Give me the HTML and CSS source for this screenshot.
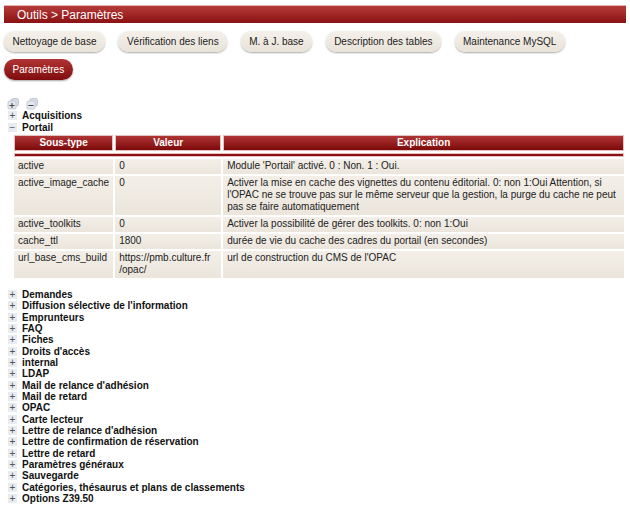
FILE: index.html
```html
<!DOCTYPE html>
<html lang="fr">
<head>
<meta charset="utf-8">
<title>Outils &gt; Paramètres</title>
<link rel="stylesheet" href="styles.css">
</head>
<body>
<div class="titlebar">Outils &gt; Paramètres</div>
<div class="tabs">
  <span class="tab">Nettoyage de base</span>
  <span class="tab">Vérification des liens</span>
  <span class="tab">M. à J. base</span>
  <span class="tab">Description des tables</span>
  <span class="tab">Maintenance MySQL</span>
</div>
<div class="tabs">
  <span class="tab active">Paramètres</span>
</div>

<div class="allicons">
  <svg class="allicon" width="12" height="12" viewBox="0 0 12 12"><rect x="4" y="0.5" width="7.5" height="7.5" rx="1.5" fill="#d6dce6" stroke="#c3cad6"/><rect x="1" y="3" width="8" height="8" rx="1.5" fill="#e3e8ef" stroke="#c3cad6"/><path d="M5 5v5M2.5 7.5h5" stroke="#444" stroke-width="1"/></svg>
  <svg class="allicon" width="12" height="12" viewBox="0 0 12 12"><rect x="4" y="0.5" width="7.5" height="7.5" rx="1.5" fill="#d6dce6" stroke="#c3cad6"/><rect x="1" y="3" width="8" height="8" rx="1.5" fill="#e3e8ef" stroke="#c3cad6"/><path d="M2.5 7.5h5" stroke="#444" stroke-width="1"/></svg>
</div>

<div class="item"><span class="pm">+</span>Acquisitions</div>
<div class="item"><span class="pm">−</span>Portail</div>

<div class="tablewrap">
<table class="params">
  <thead>
    <tr><th class="c1">Sous-type</th><th class="c2">Valeur</th><th class="c3">Explication</th></tr>
    <tr class="sep"><th colspan="3"></th></tr>
  </thead>
  <tbody>
    <tr><td>active</td><td>0</td><td>Module 'Portail' activé. 0 : Non. 1 : Oui.</td></tr>
    <tr><td>active_image_cache</td><td>0</td><td>Activer la mise en cache des vignettes du contenu éditorial. 0: non 1:Oui Attention, si l'OPAC ne se trouve pas sur le même serveur que la gestion, la purge du cache ne peut pas se faire automatiquement</td></tr>
    <tr><td>active_toolkits</td><td>0</td><td>Activer la possibilité de gérer des toolkits. 0: non 1:Oui</td></tr>
    <tr><td>cache_ttl</td><td>1800</td><td>durée de vie du cache des cadres du portail (en secondes)</td></tr>
    <tr><td>url_base_cms_build</td><td>https://pmb.culture.fr<br>/opac/</td><td>url de construction du CMS de l'OPAC</td></tr>
  </tbody>
</table>
</div>

<div class="list">
  <div class="item"><span class="pm">+</span>Demandes</div>
  <div class="item"><span class="pm">+</span>Diffusion sélective de l'information</div>
  <div class="item"><span class="pm">+</span>Emprunteurs</div>
  <div class="item"><span class="pm">+</span>FAQ</div>
  <div class="item"><span class="pm">+</span>Fiches</div>
  <div class="item"><span class="pm">+</span>Droits d'accès</div>
  <div class="item"><span class="pm">+</span>internal</div>
  <div class="item"><span class="pm">+</span>LDAP</div>
  <div class="item"><span class="pm">+</span>Mail de relance d'adhésion</div>
  <div class="item"><span class="pm">+</span>Mail de retard</div>
  <div class="item"><span class="pm">+</span>OPAC</div>
  <div class="item"><span class="pm">+</span>Carte lecteur</div>
  <div class="item"><span class="pm">+</span>Lettre de relance d'adhésion</div>
  <div class="item"><span class="pm">+</span>Lettre de confirmation de réservation</div>
  <div class="item"><span class="pm">+</span>Lettre de retard</div>
  <div class="item"><span class="pm">+</span>Paramètres généraux</div>
  <div class="item"><span class="pm">+</span>Sauvegarde</div>
  <div class="item"><span class="pm">+</span>Catégories, thésaurus et plans de classements</div>
  <div class="item"><span class="pm">+</span>Options Z39.50</div>
</div>
</body>
</html>
```
FILE: styles.css
```css
html, body {
  margin: 0;
  padding: 0;
  background: #fff;
}
body {
  font-family: "Liberation Sans", Arial, sans-serif;
  color: #222;
  font-size: 10px;
}
.titlebar {
  margin: 5px 4px 0 4px;
  height: 18px;
  line-height: 18px;
  padding-left: 13px;
  font-size: 12px;
  color: #fff;
  background: linear-gradient(#b63a3a, #8a1212);
  border-top: 1px solid #e2b4b4;
  box-sizing: border-box;
}
.tabs {
  display: flex;
  gap: 13.5px;
  margin: 8px 0 0 4px;
}
.tabs + .tabs {
  margin-top: 7px;
}
.tab {
  display: inline-block;
  height: 21px;
  line-height: 21px;
  padding: 0 8.5px;
  border-radius: 11px;
  background: linear-gradient(#f4f0ea, #e9e3d9);
  box-shadow: 0 1px 2px rgba(0,0,0,0.35);
  color: #222;
  font-size: 10px;
}
.tab.active {
  background: linear-gradient(#b23434, #7e0c0c);
  color: #fff;
}
.allicons {
  display: flex;
  gap: 7px;
  margin: 18px 0 0 7px;
  height: 12px;
}
.item {
  display: flex;
  align-items: center;
  height: 11.35px;
  padding-left: 8px;
  font-weight: bold;
  font-size: 10px;
  color: #111;
}
.pm {
  display: inline-flex;
  width: 9px;
  height: 9px;
  align-items: center;
  justify-content: center;
  margin-right: 5px;
  background: #e8ecf1;
  color: #555;
  font-weight: normal;
  font-size: 10px;
  line-height: 9px;
}
.tablewrap {
  padding: 0 4px 0 12px;
}
.params {
  width: 100%;
  border-collapse: separate;
  border-spacing: 2px;
  font-size: 10px;
}
.params th {
  background: linear-gradient(#b03434, #7c0a0a);
  color: #fff;
  font-weight: bold;
  height: 14px;
  padding: 0;
  text-align: center;
  border: 1px solid #e7c0c0;
}
.params .c1 { width: 97px; }
.params .c2 { width: 104px; }
.params tr.sep th {
  height: 2px;
  background: #8a1111;
  border: 1px solid #e7c0c0;
}
.params td {
  background: linear-gradient(#f3efe8, #ebe5dc);
  padding: 1px 4px 2px 4px;
  vertical-align: top;
  line-height: 12px;
  color: #222;
}
.list {
  margin-top: 9px;
}
```
